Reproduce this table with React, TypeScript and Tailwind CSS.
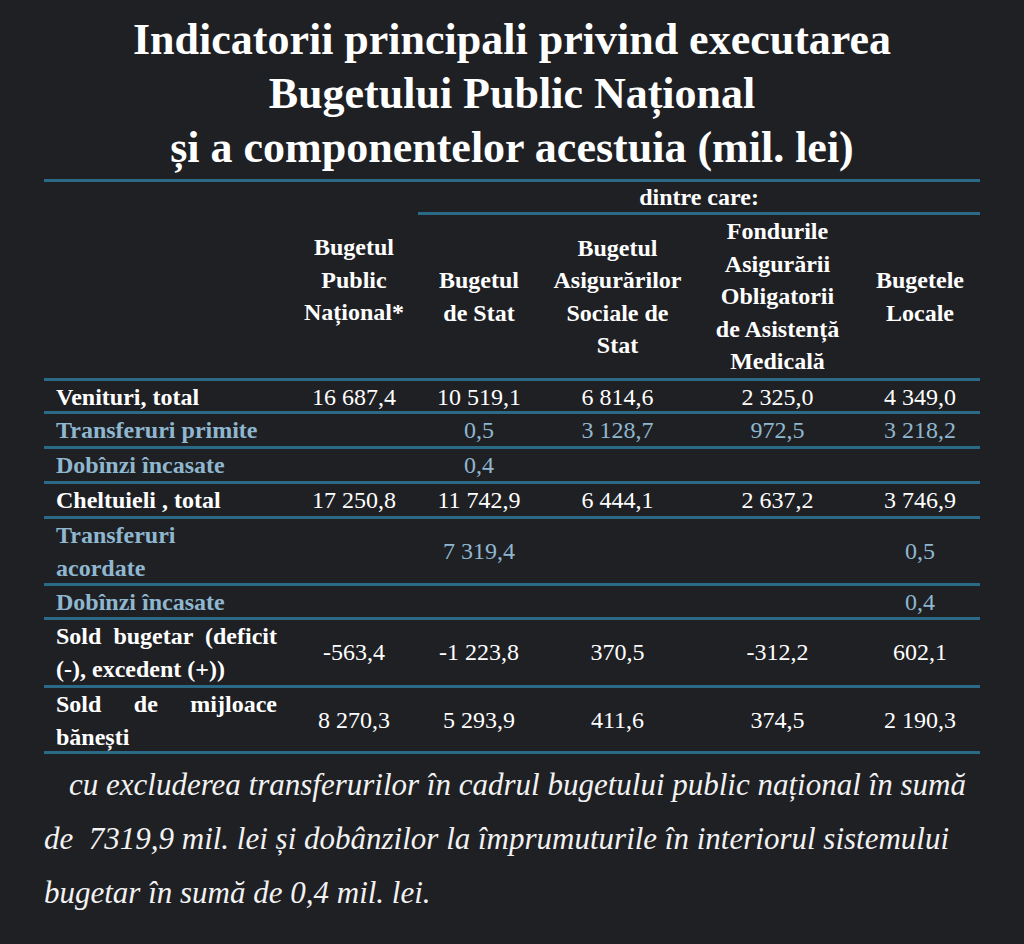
import React from "react";

const cols = "grid grid-cols-[246px_128px_122px_155px_165px_120px]";
const rule = "border-b-[3px] border-[#2b6a86]";

type Row = {
  label: React.ReactNode;
  values: string[];
  blue?: boolean;
  height: string;
  justify?: boolean;
};

const rows: Row[] = [
  { label: "Venituri, total", values: ["16 687,4", "10 519,1", "6 814,6", "2 325,0", "4 349,0"], height: "h-[33px]" },
  { label: "Transferuri primite", values: ["", "0,5", "3 128,7", "972,5", "3 218,2"], blue: true, height: "h-[35px]" },
  { label: "Dobînzi încasate", values: ["", "0,4", "", "", ""], blue: true, height: "h-[35px]" },
  { label: "Cheltuieli , total", values: ["17 250,8", "11 742,9", "6 444,1", "2 637,2", "3 746,9"], height: "h-[35px]" },
  {
    label: (
      <>
        Transferuri
        <br />
        acordate
      </>
    ),
    values: ["", "7 319,4", "", "", "0,5"],
    blue: true,
    height: "h-[67px]",
  },
  { label: "Dobînzi încasate", values: ["", "", "", "", "0,4"], blue: true, height: "h-[34px]" },
  {
    label: "Sold bugetar (deficit (-), excedent (+))",
    values: ["-563,4", "-1 223,8", "370,5", "-312,2", "602,1"],
    height: "h-[68px]",
    justify: true,
  },
  {
    label: "Sold de mijloace bănești",
    values: ["8 270,3", "5 293,9", "411,6", "374,5", "2 190,3"],
    height: "h-[66px]",
    justify: true,
  },
];

const headers: React.ReactNode[] = [
  <>
    Bugetul
    <br />
    de Stat
  </>,
  <>
    Bugetul
    <br />
    Asigurărilor
    <br />
    Sociale de
    <br />
    Stat
  </>,
  <>
    Fondurile
    <br />
    Asigurării
    <br />
    Obligatorii
    <br />
    de Asistență
    <br />
    Medicală
  </>,
  <>
    Bugetele
    <br />
    Locale
  </>,
];

export default function App() {
  return (
    <div className="min-h-[944px] w-full bg-[#1f2024] text-white font-['Liberation_Serif',serif]">
      {/* Title */}
      <h1 className="pt-[13px] text-center text-[44px] font-bold leading-[54px]">
        Indicatorii principali privind executarea
        <br />
        Bugetului Public Național
        <br />
        și a componentelor acestuia (mil. lei)
      </h1>

      <div className="mx-auto mt-[4px] w-[936px]">
        {/* Table header */}
        <div className={`${cols} grid-rows-[33px_166px] border-t-[3px] border-[#2b6a86] text-[24px] font-bold leading-[32.5px]`}>
          <div className={`row-span-2 ${rule}`} />
          <div className={`row-span-2 flex items-center justify-center text-center ${rule}`}>
            <div>
              Bugetul
              <br />
              Public
              <br />
              Național*
            </div>
          </div>
          <div className={`col-span-4 flex items-center justify-center leading-[30px] ${rule}`}>dintre care:</div>
          {headers.map((h, i) => (
            <div key={i} className={`flex items-center justify-center text-center ${rule}`}>
              <div>{h}</div>
            </div>
          ))}
        </div>

        {/* Table body */}
        {rows.map((r, i) => (
          <div
            key={i}
            className={`${cols} ${r.height} ${rule} text-[24px] leading-[32.5px] ${r.blue ? "text-[#8fb7cf]" : "text-white"}`}
          >
            <div className="flex items-center pl-[12px] pr-[13px] font-bold">
              <div className={r.justify ? "w-full text-justify" : ""}>{r.label}</div>
            </div>
            {r.values.map((v, j) => (
              <div key={j} className="flex items-center justify-center whitespace-nowrap">
                {v}
              </div>
            ))}
          </div>
        ))}

        {/* Footnote */}
        <div className="mt-[4px] text-[31px] italic leading-[54px] text-[#f2f2f2]">
          <div className="whitespace-pre pl-[25px]">cu excluderea transferurilor în cadrul bugetului public național în sumă</div>
          <div className="whitespace-pre">de  7319,9 mil. lei și dobânzilor la împrumuturile în interiorul sistemului</div>
          <div className="whitespace-pre">bugetar în sumă de 0,4 mil. lei.</div>
        </div>
      </div>
    </div>
  );
}
